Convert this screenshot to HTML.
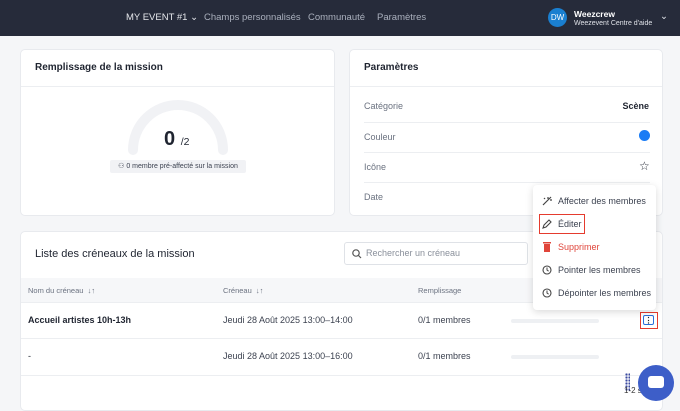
<!DOCTYPE html>
<html><head><meta charset="utf-8"><style>
*{box-sizing:border-box;margin:0;padding:0}
body{width:680px;height:401px;overflow:hidden;background:#f5f6f8;font-family:"Liberation Sans",sans-serif;color:#1f2430;position:relative}
.nav{position:absolute;left:0;top:0;width:680px;height:36px;background:#262b3a;color:#aab0bd;font-size:9.5px}
.nav span{position:absolute;top:12px}
.card{position:absolute;background:#fff;border:1px solid #e8eaee;border-radius:5px}
.t{position:absolute;font-size:10px}
.g{color:#6b7280;font-size:9px;position:absolute}
.hr{position:absolute;height:1px;background:#eceef1}
.menu{position:absolute;left:533px;top:185px;width:123px;height:125px;background:#fff;border-radius:4px;box-shadow:0 2px 8px rgba(0,0,0,.15);font-size:9px;color:#3c4250}
.menu div{position:absolute;left:25px}
.menu svg{position:absolute;left:-16px;top:0px}
</style></head><body>
<div class="nav">
<span style="left:126px;color:#e6e8ec">MY EVENT #1 ⌄</span>
<span style="left:204px">Champs personnalisés</span>
<span style="left:308px">Communauté</span>
<span style="left:377px">Paramètres</span>
<div style="position:absolute;left:548px;top:8px;width:19px;height:19px;border-radius:50%;background:#1a7fd0;color:#fff;font-size:8px;text-align:center;line-height:19px">DW</div>
<span style="left:574px;top:9px;color:#fff;font-weight:bold;font-size:8.5px">Weezcrew</span>
<span style="left:574px;top:20px;color:#dfe2e8;font-size:7px">Weezevent Centre d'aide</span>
<span style="left:660px;top:11px;color:#dfe2e8">⌄</span>
</div>
<div class="card" style="left:20px;top:49px;width:315px;height:167px">
<div class="t" style="left:14px;top:12px;font-weight:bold;font-size:10px">Remplissage de la mission</div>
<div class="hr" style="left:0;top:36px;width:313px"></div>
<svg style="position:absolute;left:104px;top:50px" width="106" height="56"><path d="M8 50 A45 45 0 0 1 98 50" fill="none" stroke="#f1f2f5" stroke-width="10" stroke-linecap="round"/></svg>
<div style="position:absolute;left:143px;top:78px;font-size:20px;font-weight:bold">0 <span style="font-size:10.5px;font-weight:normal">/2</span></div>
<div style="position:absolute;left:89px;top:110px;width:136px;height:13px;background:#f1f2f5;border-radius:2px;font-size:7px;color:#3c4250;line-height:13px;text-align:center">⚇ 0 membre pré-affecté sur la mission</div>
</div>
<div class="card" style="left:349px;top:49px;width:314px;height:167px">
<div class="t" style="left:14px;top:12px;font-weight:bold;font-size:10px">Paramètres</div>
<div class="hr" style="left:0;top:36px;width:312px"></div>
<div class="g" style="left:14px;top:51px">Catégorie</div><div style="position:absolute;right:13px;top:51px;font-size:9px;font-weight:bold">Scène</div>
<div class="hr" style="left:14px;top:72px;width:286px"></div>
<div class="g" style="left:14px;top:82px">Couleur</div><div style="position:absolute;left:289px;top:80px;width:11px;height:11px;border-radius:50%;background:#1a7cf5"></div>
<div class="hr" style="left:14px;top:102px;width:286px"></div>
<div class="g" style="left:14px;top:112px">Icône</div><div style="position:absolute;left:289px;top:109px;font-size:12px">☆</div>
<div class="hr" style="left:14px;top:132px;width:286px"></div>
<div class="g" style="left:14px;top:142px">Date</div>
</div>
<div class="card" style="left:20px;top:231px;width:643px;height:180px">
<div class="t" style="left:14px;top:16px;font-size:11px">Liste des créneaux de la mission</div>
<div style="position:absolute;left:323px;top:10px;width:184px;height:23px;border:1px solid #dfe2e7;border-radius:3px;font-size:9px;color:#8a909b;line-height:21px;padding-left:21px">Rechercher un créneau<svg style="position:absolute;left:7px;top:6px" width="10" height="10"><circle cx="4" cy="4" r="3.2" fill="none" stroke="#555" stroke-width="1.2"/><path d="M6.5 6.5L9 9" stroke="#555" stroke-width="1.2"/></svg></div>
<div style="position:absolute;left:0;top:46px;width:641px;height:24px;background:#f6f7f9;font-size:7.5px;color:#6b7280">
<span style="position:absolute;left:7px;top:8px">Nom du créneau &nbsp;↓↑</span>
<span style="position:absolute;left:202px;top:8px">Créneau &nbsp;↓↑</span>
<span style="position:absolute;left:397px;top:8px">Remplissage</span></div>
<div class="hr" style="left:0;top:70px;width:641px"></div>
<div style="position:absolute;left:7px;top:83px;font-size:9px;font-weight:bold">Accueil artistes 10h-13h</div>
<div style="position:absolute;left:202px;top:83px;font-size:9px;color:#3c4250">Jeudi 28 Août 2025 13:00–14:00</div>
<div style="position:absolute;left:397px;top:83px;font-size:9px;color:#3c4250">0/1 membres</div>
<div style="position:absolute;left:490px;top:87px;width:88px;height:4px;border-radius:2px;background:#eef0f3"></div>
<div style="position:absolute;left:619px;top:80px;width:18px;height:17px;border:1.5px solid #e53b2e"><div style="position:absolute;left:2px;top:2px;width:11px;height:10px;border:1px solid #2a6fdb;border-radius:2px;font-size:8px;text-align:center;line-height:9px;font-weight:bold">⋮</div></div>
<div class="hr" style="left:0;top:106px;width:641px"></div>
<div style="position:absolute;left:7px;top:119px;font-size:9px">-</div>
<div style="position:absolute;left:202px;top:119px;font-size:9px;color:#3c4250">Jeudi 28 Août 2025 13:00–16:00</div>
<div style="position:absolute;left:397px;top:119px;font-size:9px;color:#3c4250">0/1 membres</div>
<div style="position:absolute;left:490px;top:123px;width:88px;height:4px;border-radius:2px;background:#eef0f3"></div>
<div class="hr" style="left:0;top:143px;width:641px"></div>
</div>
<div class="menu">
<div style="top:11px">Affecter des membres<svg width="10" height="10"><path d="M1 9L9 1M6 1v2M8 4h2M2 2l1 1" stroke="#444" stroke-width="1.2"/></svg></div>
<div style="top:34px">Éditer<svg width="10" height="10"><path d="M1 9l1-3 5-5 2 2-5 5z" fill="none" stroke="#444" stroke-width="1.1"/></svg></div>
<div style="left:6px;top:29px;width:46px;height:20px;border:1.5px solid #e53b2e"></div>
<div style="top:57px;color:#e0453a">Supprimer<svg width="10" height="10"><rect x="2" y="2" width="6" height="8" fill="#e0453a"/><rect x="1" y="0" width="8" height="1.5" fill="#e0453a"/></svg></div>
<div style="top:80px">Pointer les membres<svg width="10" height="10"><circle cx="5" cy="5" r="4" fill="none" stroke="#444" stroke-width="1.1"/><path d="M5 2.5V5l1.6 1.2" fill="none" stroke="#444"/></svg></div>
<div style="top:103px">Dépointer les membres<svg width="10" height="10"><circle cx="5" cy="5" r="4" fill="none" stroke="#444" stroke-width="1.1"/><path d="M5 2.5V5l1.6 1.2" fill="none" stroke="#444"/></svg></div>
</div>
<div style="position:absolute;left:625px;top:373px;width:5px;height:18px;background:radial-gradient(circle,#3b4aa0 1px,transparent 1.3px) 0 0/3px 3px"></div>
<div style="position:absolute;left:624px;top:386px;font-size:8px;color:#333">1-2 s</div>
<div style="position:absolute;left:638px;top:365px;width:36px;height:36px;border-radius:50%;background:#3d5ec8"><div style="position:absolute;left:10px;top:11px;width:16px;height:12px;background:#fff;border-radius:3px"></div></div>
</body></html>
